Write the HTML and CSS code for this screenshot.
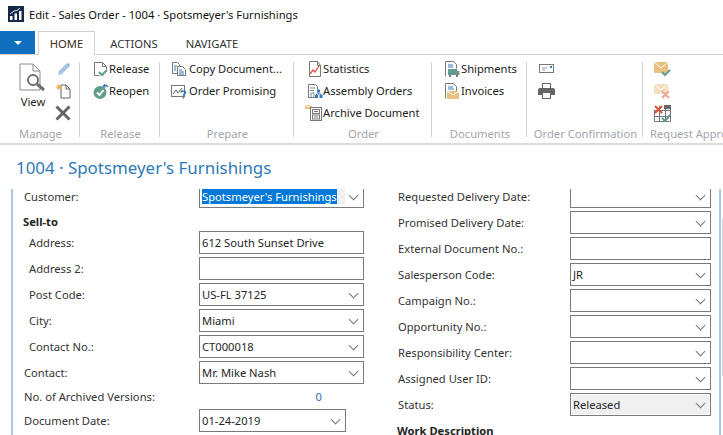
FILE: index.html
```html
<!DOCTYPE html>
<html lang="en">
<head>
<meta charset="utf-8">
<title>Edit - Sales Order - 1004 · Spotsmeyer's Furnishings</title>
<link rel="stylesheet" href="styles.css">
</head>
<body>
<header class="titlebar">
  <svg class="app-icon" width="16" height="16" viewBox="0 0 16 16"><rect width="16" height="16" fill="#14284b"/><path d="M2 14v-4h2.500v4zM6.500 14V7.500H9V14zM11 14V5h2.500v9z" fill="#fff"/><path d="M2 8l4-3 3-.5 3-2.500" fill="none" stroke="#dfe8f5"/></svg>
  <span>Edit - Sales Order - 1004 · Spotsmeyer's Furnishings</span>
</header>
<nav class="tabs">
  <button class="menu-button"><i class="menu-arrow"></i></button>
  <div class="tab tab-active">HOME</div>
  <div class="tab">ACTIONS</div>
  <div class="tab">NAVIGATE</div>
</nav>
<section class="ribbon">
  <div class="group group-manage">
    <div class="group-body manage-body">
      <div class="big-action">
        <svg width="28" height="29" viewBox="0 0 28 29"><path d="M1 1h13l7 7v19H1z" fill="#fff" stroke="#8a8a8a"/><path d="M14 1v7h7" fill="none" stroke="#8a8a8a"/><circle cx="14" cy="17" r="5" fill="#fff" stroke="#6e6e6e" stroke-width="2"/><path d="M18 21l7 6" stroke="#6e6e6e" stroke-width="3"/></svg>
        <span>View</span>
      </div>
      <div class="small-icons">
        <svg width="16" height="16" viewBox="0 0 16 16"><path d="M3 14l1-4 7-7 3 3-7 7z" fill="#a9c4e4"/><path d="M11 3l2-1 2 2-1 2z" fill="#8fb0d8"/></svg>
        <svg width="16" height="16" viewBox="0 0 16 16"><path d="M6 2h5l4 4v9H6z" fill="#fff" stroke="#666"/><path d="M11 2v4h4" fill="none" stroke="#666"/><path d="M4 1v6M1 4h6M2 2l4 4M6 2L2 6" stroke="#e8a93c"/></svg>
        <svg width="16" height="16" viewBox="0 0 16 16"><path d="M1.500 1.500l13 13M14.500 1.500l-13 13" stroke="#666" stroke-width="3"/></svg>
      </div>
    </div>
    <div class="group-label">Manage</div>
  </div>
  <div class="group group-release">
    <div class="group-body">
      <div class="action"><svg width="16" height="16" viewBox="0 0 16 16"><path d="M1.500 1.500h8l4 4v3M1.500 1.500v13h5" fill="none" stroke="#777"/><path d="M9.500 1.500v4h4" fill="none" stroke="#777"/><path d="M6 11l3 3 5-5" fill="none" stroke="#5f9e8c" stroke-width="2"/></svg>Release</div>
      <div class="action"><svg width="16" height="16" viewBox="0 0 16 16"><circle cx="7" cy="9.500" r="6.500" fill="#5f9e8c"/><path d="M4 9.500l2.500 2.500 4-5" fill="none" stroke="#fff" stroke-width="2"/><path d="M10 3.500c2-2 4-1.500 5 .5M10 3.500l2-2M10 3.500l2.500.5" fill="none" stroke="#3a78b8" stroke-width="1.300"/></svg>Reopen</div>
    </div>
    <div class="group-label">Release</div>
  </div>
  <div class="group group-prepare">
    <div class="group-body">
      <div class="action"><svg width="16" height="16" viewBox="0 0 16 16"><path d="M1.500 1.500h5l2 2v9h-7z" fill="#fff" stroke="#777"/><path d="M6.500 5.500h5l3 3v6h-8z" fill="#fff" stroke="#777"/><path d="M3 5h3M3 7h2M3 9h2M8 9h3M8 11h5M8 13h5" stroke="#3a78b8"/></svg>Copy Document...</div>
      <div class="action"><svg width="16" height="16" viewBox="0 0 16 16"><rect x=".5" y="2.500" width="13" height="11" fill="#fff" stroke="#777"/><path d="M2 11l3-4 2 3 4-5" fill="none" stroke="#666"/><path d="M10 9.500c0-2 4.500-2 4.500 0 0 1.500-2 1.500-2 3.200M12.500 14v1.500" fill="none" stroke="#2f79bd" stroke-width="1.600"/></svg>Order Promising</div>
    </div>
    <div class="group-label">Prepare</div>
  </div>
  <div class="group group-order">
    <div class="group-body">
      <div class="action"><svg width="16" height="16" viewBox="0 0 16 16"><path d="M2.500 .5h8l3 4v11h-11z" fill="#fff" stroke="#777"/><path d="M10.500 .5v4h3" fill="none" stroke="#777"/><path d="M3 13l3-4 2 2 4-6" fill="none" stroke="#d8563c" stroke-width="1.300"/></svg>Statistics</div>
      <div class="action"><svg width="16" height="16" viewBox="0 0 16 16"><path d="M1.500 1.500h7l2 2v3M1.500 1.500v13h6" fill="none" stroke="#777"/><path d="M3 5h5M3 7.500h4" stroke="#888"/><path d="M4 14v-4h3v4" fill="none" stroke="#888"/><rect x="10" y="6.500" width="3" height="3" fill="#3a78b8"/><rect x="8" y="12" width="3" height="3" fill="#3a78b8"/><rect x="12.500" y="12" width="3" height="3" fill="#3a78b8"/><path d="M11.500 9.500v1.500h-2v1M11.500 11h2.500v1" fill="none" stroke="#3a78b8"/></svg>Assembly Orders</div>
      <div class="action action-wide"><svg width="18" height="16" viewBox="0 0 18 16"><path d="M0 0h7v4H0z" fill="#e9c07f"/><path d="M0 0l3.500 2L7 0" fill="none" stroke="#fff"/><rect x="5.500" y="2.500" width="11" height="13" fill="#fff" stroke="#777"/><rect x="7.500" y="4.500" width="7" height="4" fill="none" stroke="#777"/><rect x="7.500" y="10" width="7" height="4" fill="none" stroke="#777"/><path d="M9 6.500h4M9 12h4" stroke="#777"/></svg>Archive Document</div>
    </div>
    <div class="group-label">Order</div>
  </div>
  <div class="group group-documents">
    <div class="group-body">
      <div class="action"><svg width="16" height="16" viewBox="0 0 16 16"><path d="M1.500 15.500v-15h8l3 3v4" fill="none" stroke="#777"/><path d="M4 4h5M4 6h5" stroke="#3a78b8"/><rect x="4" y="8" width="9" height="6" fill="#5f9e8c"/><path d="M13 10h2.500v4H13z" fill="#888"/><circle cx="6" cy="15" r="1" fill="#555"/><circle cx="13" cy="15" r="1" fill="#555"/></svg>Shipments</div>
      <div class="action"><svg width="16" height="16" viewBox="0 0 16 16"><path d="M1.500 15.500v-15h8l3 3v5" fill="none" stroke="#777"/><path d="M4 4h5M4 6h6" stroke="#3a78b8"/><rect x="3" y="8" width="12" height="8" fill="#e9c07f"/><path d="M3 8l6 4 6-4" fill="none" stroke="#fff"/></svg>Invoices</div>
    </div>
    <div class="group-label">Documents</div>
  </div>
  <div class="group group-confirm">
    <div class="group-body">
      <div class="action action-env"><svg width="16" height="10" viewBox="0 0 16 10"><rect x=".5" y=".5" width="14" height="8" fill="#fff" stroke="#777"/><rect x="11" y="2" width="2" height="2" fill="#2f79bd"/><path d="M3 4h5M3 6h3" stroke="#999"/></svg></div>
      <div class="action action-icon"><svg width="17" height="16" viewBox="0 0 17 16"><rect x="4.500" y=".5" width="8" height="5" fill="#fff" stroke="#666"/><path d="M0 7q0-2 2-2h13q2 0 2 2v5H0z" fill="#666"/><rect x="4.500" y="9.500" width="8" height="6" fill="#fff" stroke="#666"/></svg></div>
    </div>
    <div class="group-label">Order Confirmation</div>
  </div>
  <div class="group group-approval">
    <div class="group-body">
      <div class="action action-icon"><svg width="17" height="16" viewBox="0 0 17 16"><rect y="1" width="14" height="11" fill="#e9c07f"/><path d="M0 1l7 6 7-6" fill="none" stroke="#fff"/><path d="M8 11l3 3 5-5" fill="none" stroke="#5f9e8c" stroke-width="2"/></svg></div>
      <div class="action action-icon"><svg width="17" height="16" viewBox="0 0 17 16"><rect y="1" width="14" height="10" fill="#f4dfc0"/><path d="M0 1l7 6 7-6" fill="none" stroke="#fff"/><path d="M8 8l7 7M15 8l-7 7" stroke="#eba99b" stroke-width="2.200"/></svg></div>
      <div class="action action-icon"><svg width="17" height="17" viewBox="0 0 17 17"><path d="M.5 5.500h16M.5 11.500h16M5.500 1v15.500M11.500 1v15.500M.5 5v11.500h16V1" fill="none" stroke="#777"/><rect x="10" y="0" width="7" height="4" fill="#666"/><path d="M1 1l7 7M8 1L1 8" stroke="#d9533a" stroke-width="2"/><path d="M8 13l3 3 5-6" fill="none" stroke="#5f9e8c" stroke-width="2"/></svg></div>
    </div>
    <div class="group-label">Request Approval</div>
  </div>
</section>
<h1 class="page-title">1004 · Spotsmeyer's Furnishings</h1>
<main class="card">
  <div class="scroll-thumb"></div>
  <div class="form">
    <div class="column column-left">
      <div class="row"><label class="label">Customer:</label><div class="field select selected"><span class="selection">Spotsmeyer's Furnishings</span></div></div>
      <div class="heading heading-left">Sell-to</div>
      <div class="row"><label class="label indent">Address:</label><div class="field">612 South Sunset Drive</div></div>
      <div class="row"><label class="label indent">Address 2:</label><div class="field"></div></div>
      <div class="row"><label class="label indent">Post Code:</label><div class="field select">US-FL 37125</div></div>
      <div class="row"><label class="label indent">City:</label><div class="field select">Miami</div></div>
      <div class="row"><label class="label indent">Contact No.:</label><div class="field select">CT000018</div></div>
      <div class="row"><label class="label">Contact:</label><div class="field select">Mr. Mike Nash</div></div>
      <div class="row row-static"><label class="label">No. of Archived Versions:</label><div class="value">0</div></div>
      <div class="row"><label class="label">Document Date:</label><div class="field select field-short">01-24-2019</div></div>
    </div>
    <div class="column column-right">
      <div class="row"><label class="label">Requested Delivery Date:</label><div class="field select"></div></div>
      <div class="row"><label class="label">Promised Delivery Date:</label><div class="field select"></div></div>
      <div class="row"><label class="label">External Document No.:</label><div class="field"></div></div>
      <div class="row"><label class="label">Salesperson Code:</label><div class="field select">JR</div></div>
      <div class="row"><label class="label">Campaign No.:</label><div class="field select"></div></div>
      <div class="row"><label class="label">Opportunity No.:</label><div class="field select"></div></div>
      <div class="row"><label class="label">Responsibility Center:</label><div class="field select"></div></div>
      <div class="row"><label class="label">Assigned User ID:</label><div class="field select"></div></div>
      <div class="row"><label class="label">Status:</label><div class="field select readonly">Released</div></div>
      <div class="heading heading-right">Work Description</div>
    </div>
  </div>
</main>
</body>
</html>
```
FILE: styles.css
```css
* { box-sizing: border-box; }
html, body { margin: 0; height: 100%; }
body {
  width: 723px;
  height: 435px;
  overflow: hidden;
  background: #fff;
  color: #262626;
  font: 11.2px/16px "Noto Sans", "Liberation Sans", sans-serif;
}
.titlebar { height: 31px; display: flex; align-items: center; gap: 5px; padding: 0 0 1px 8px; color: #111; }
.app-icon { flex: none; margin-top: -2px; }
.tabs { height: 24px; display: flex; align-items: stretch; color: #333; }
.menu-button { width: 35px; height: 23px; padding: 0; border: 0; background: #106ebe; display: flex; align-items: center; justify-content: center; }
.menu-arrow { width: 0; height: 0; border: 4px solid transparent; border-top: 4px solid #fff; border-bottom: 0; }
.tab { padding: 5px 0 0 0; width: 78px; text-align: center; }
.tab-active { width: 57px; margin-left: 3px; background: #fff; border: 1px solid #d0d0d0; border-bottom: 0; color: #3a2a20; position: relative; z-index: 1; height: 24px; padding-top: 4px; }
.ribbon { height: 91px; display: flex; align-items: flex-start; overflow: hidden; border-top: 1px solid #d0d0d0; border-bottom: 2px solid #dcdcdc; padding-top: 7px; margin-top: -1px; color: #1c1c1c; }
.group { flex: none; height: 75px; border-right: 1px solid #d4d4d4; display: flex; flex-direction: column; }
.group-body { flex: 1; margin-top: -4px; display: flex; flex-direction: column; }
.group-label { text-align: center; color: #a3a6aa; height: 16px; white-space: nowrap; padding-left: 2px; margin-bottom: -5px; }
.group-manage { width: 80px; }
.group-release { width: 80px; }
.group-prepare { width: 134px; }
.group-order { width: 138px; }
.group-documents { width: 95px; }
.group-confirm { width: 116px; }
.group-approval { width: 120px; border-right: 0; }
.group-approval .group-label { text-align: left; padding-left: 7px; }
.manage-body { flex-direction: row; padding-left: 19px; gap: 8px; }
.big-action { display: flex; flex-direction: column; align-items: center; width: 28px; gap: 2px; padding-top: 5px; }
.small-icons { display: flex; flex-direction: column; gap: 6px; padding-top: 3px; }
.action { height: 22px; display: flex; align-items: center; padding-left: 13px; white-space: nowrap; }
.group-prepare .action { padding-left: 11px; gap: 2px; }
.group-documents .action { padding-left: 12px; gap: 1px; }
.action-wide { padding-left: 11px; }
.action-env { padding-left: 12px; }
.action-icon { padding-left: 11px; }
.page-title { margin: 0; height: 44px; padding: 11px 0 0 16px; font-size: 16.9px; line-height: 24px; font-weight: 400; color: #2e7ab8; }
.card { height: 246px; margin-left: 11px; width: 710px; border-left: 2px solid #a9c7ee; border-right: 2px solid #a9c7ee; overflow: hidden; }
.scroll-thumb { position: absolute; left: 722px; top: 218px; width: 1px; height: 158px; background: #d8d8d8; }
.form { display: flex; margin-top: -4px; }
.column { display: flex; flex-direction: column; gap: 3px; }
.column-left { width: 353px; padding-left: 11px; }
.column-right { width: 322px; padding-left: 32px; }
.row { display: flex; align-items: center; height: 23px; flex: none; }
.column-left .label { width: 175px; }
.column-right .label { width: 172px; }
.label { flex: none; white-space: nowrap; color: #333; }
.indent { padding-left: 5px; }
.heading { font-weight: 700; color: #222; white-space: nowrap; }
.heading-left { height: 17px; line-height: 21px; margin-left: -1px; }
.heading-right { margin-left: -1px; height: 16px; line-height: 24px; }
.field { flex: none; position: relative; height: 23px; border: 1px solid #7a7a7a; padding: 0 2px; line-height: 21px; white-space: nowrap; overflow: hidden; color: #262626; }
.column-left .field { width: 165px; }
.column-right .field { width: 141px; }
.column-left .field-short { width: 147px; }
.select::after { content: ""; position: absolute; right: 6px; top: 6px; width: 6px; height: 6px; border-right: 1px solid #777; border-bottom: 1px solid #777; transform: rotate(45deg); }
.selected { background: linear-gradient(#f0f0f0, #f0f0f0) 2px 3px / 143px 15px no-repeat; }
.selection { display: inline-block; height: 15px; line-height: 15px; background: #0078d7; color: #fff; margin-top: 3px; vertical-align: top; }
.readonly { background: #f0f0f0; box-shadow: inset 0 0 0 1px #fff; }
.row-static { height: 19px; }
.value { width: 123px; text-align: right; color: #2e6fb8; }
```
